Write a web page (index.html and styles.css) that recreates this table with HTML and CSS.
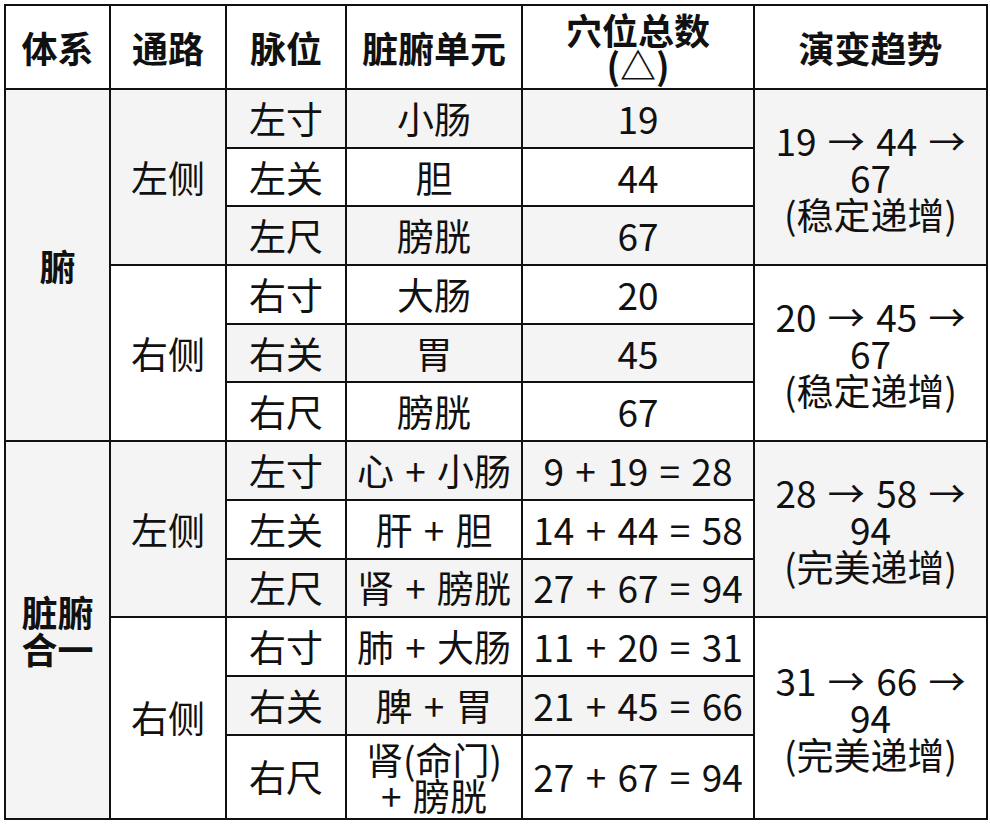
FILE: index.html
```html
<!DOCTYPE html>
<html lang="zh-CN">
<head>
<meta charset="utf-8">
<title>脏腑穴位表</title>
<link rel="stylesheet" href="styles.css">
</head>
<body>
<table class="grid">
  <colgroup>
    <col class="c1"><col class="c2"><col class="c3"><col class="c4"><col class="c5"><col class="c6">
  </colgroup>
  <thead>
    <tr class="head">
      <th>体系</th>
      <th>通路</th>
      <th>脉位</th>
      <th>脏腑单元</th>
      <th class="two">穴位总数<br>(△)</th>
      <th>演变趋势</th>
    </tr>
  </thead>
  <tbody>
    <tr>
      <td rowspan="6" class="sys">腑</td>
      <td rowspan="3">左侧</td>
      <td>左寸</td><td>小肠</td><td>19</td>
      <td rowspan="3" class="trend">19 → 44 →<br>67<br>(稳定递增)</td>
    </tr>
    <tr><td>左关</td><td>胆</td><td>44</td></tr>
    <tr><td>左尺</td><td>膀胱</td><td>67</td></tr>
    <tr>
      <td rowspan="3">右侧</td>
      <td>右寸</td><td>大肠</td><td>20</td>
      <td rowspan="3" class="trend">20 → 45 →<br>67<br>(稳定递增)</td>
    </tr>
    <tr><td>右关</td><td>胃</td><td>45</td></tr>
    <tr><td>右尺</td><td>膀胱</td><td>67</td></tr>
    <tr>
      <td rowspan="6" class="sys">脏腑<br>合一</td>
      <td rowspan="3">左侧</td>
      <td>左寸</td><td>心 + 小肠</td><td>9 + 19 = 28</td>
      <td rowspan="3" class="trend">28 → 58 →<br>94<br>(完美递增)</td>
    </tr>
    <tr><td>左关</td><td>肝 + 胆</td><td>14 + 44 = 58</td></tr>
    <tr><td>左尺</td><td>肾 + 膀胱</td><td>27 + 67 = 94</td></tr>
    <tr>
      <td rowspan="3">右侧</td>
      <td>右寸</td><td>肺 + 大肠</td><td>11 + 20 = 31</td>
      <td rowspan="3" class="trend">31 → 66 →<br>94<br>(完美递增)</td>
    </tr>
    <tr><td>右关</td><td>脾 + 胃</td><td>21 + 45 = 66</td></tr>
    <tr class="tall"><td>右尺</td><td class="two">肾(命门)<br>+ 膀胱</td><td>27 + 67 = 94</td></tr>
  </tbody>
</table>
</body>
</html>
```

FILE: styles.css
```css
html, body {
  margin: 0;
  padding: 0;
  background: #ffffff;
}

body {
  padding: 4px 0 0 4px;
  font-family: "Noto Sans CJK SC", "Noto Sans", sans-serif;
  color: #111111;
}

.grid {
  border-collapse: collapse;
  table-layout: fixed;
  width: 982px;
  font-size: 37px;
  line-height: 37px;
  word-spacing: 3px;
}

.c1 { width: 105px; }
.c2 { width: 116px; }
.c3 { width: 120px; }
.c4 { width: 176px; }
.c5 { width: 232px; }
.c6 { width: 233px; }

.grid th,
.grid td {
  border: 2px solid #111111;
  padding: 0 2px;
  text-align: center;
  vertical-align: middle;
  white-space: nowrap;
}

.grid th {
  font-weight: 700;
  font-size: 36px;
}

.head {
  height: 84px;
}

.head .two {
  line-height: 35px;
}

.grid tbody tr {
  height: 58.7px;
}

.grid tbody tr.tall {
  height: 84px;
}

.grid tbody tr:nth-child(odd) td {
  background: #f4f4f4;
}

.grid td.sys {
  font-weight: 700;
  font-size: 36px;
}

.grid td.two {
  line-height: 36px;
}

.grid td.trend {
  line-height: 37px;
}
```
